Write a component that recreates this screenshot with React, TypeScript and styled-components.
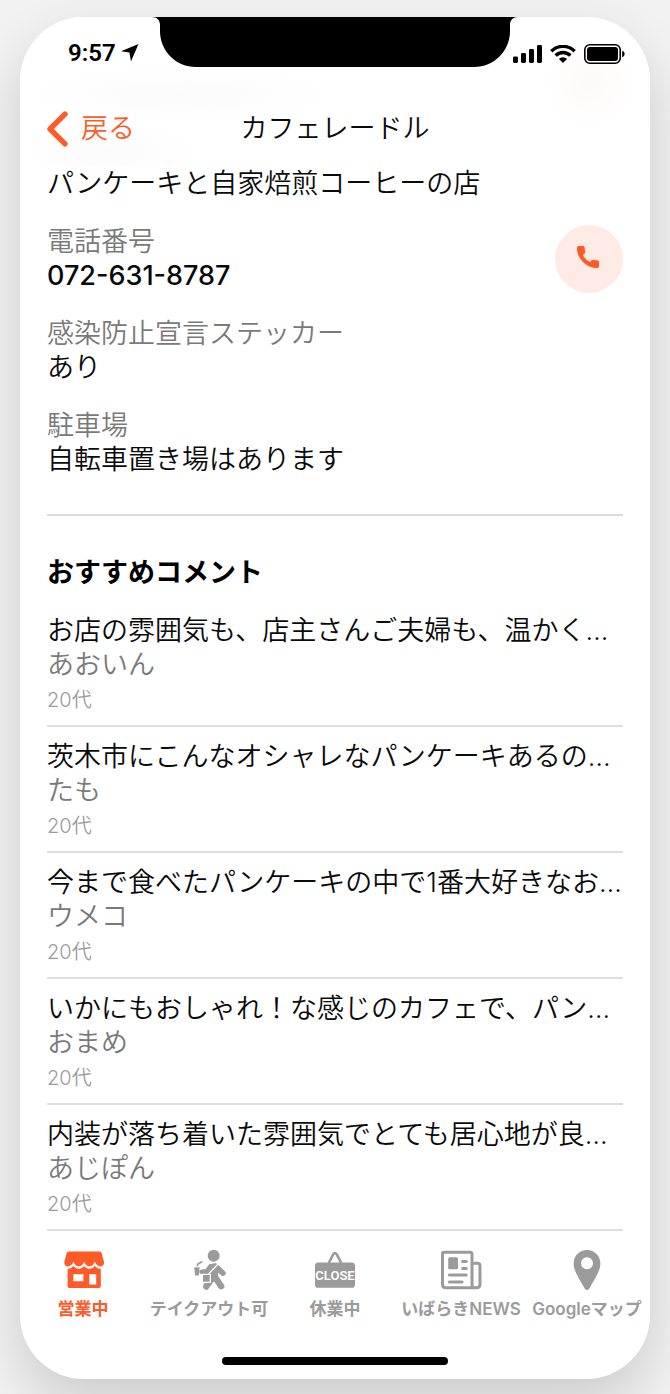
import React from "react";
import styled, { createGlobalStyle } from "styled-components";

const ACCENT = "#ff5a28";
const MUTED = "#9b9b9b";

const GlobalStyle = createGlobalStyle`
  * { box-sizing: border-box; }
  body {
    margin: 0;
    background: #f2f2f2;
    font-family: Inter, "Noto Sans CJK JP", sans-serif;
    font-size: 27px;
    font-weight: 350;
    line-height: 34px;
    color: #0a0a0a;
  }
  svg { display: block; flex: none; }
`;

const Stage = styled.div`
  padding: 17px 20px 15px;
  overflow: hidden;
`;

const Phone = styled.div`
  background: #fff;
  border-radius: 64px;
  overflow: hidden;
  box-shadow: 0 24px 56px rgba(0, 0, 0, 0.16);
`;

const TopArea = styled.header`
  background:
    radial-gradient(ellipse 45px 45px at 570px 66px, #fff9f8, transparent),
    radial-gradient(ellipse 160px 30px at 160px 78px, #fbfbfb, transparent),
    radial-gradient(ellipse 90px 30px at 90px 134px, #fbfbfb, transparent),
    #fff;
`;

const StatusBar = styled.div`
  display: grid;
  grid-template-columns: 1fr auto 1fr;
  height: 50px;
`;

const StatusSide = styled.div<{ $end?: boolean }>`
  display: flex;
  align-items: center;
  justify-content: ${(p) => (p.$end ? "flex-end" : "flex-start")};
  gap: ${(p) => (p.$end ? "8px" : "5px")};
  padding: ${(p) => (p.$end ? "23px 25px 0 0" : "22px 0 0 48px")};
`;

const Clock = styled.time`
  font: 600 24px/28px Roboto, sans-serif;
  color: #000;
`;

const NavBar = styled.div`
  display: grid;
  grid-template-columns: 1fr auto 1fr;
  align-items: center;
  padding: 44px 27px 20px;
`;

const BackButton = styled.button`
  display: flex;
  align-items: center;
  justify-self: start;
  gap: 12px;
  padding: 0;
  border: 0;
  background: none;
  font: inherit;
  color: ${ACCENT};
`;

const Title = styled.h1`
  margin: 0;
  font-size: 27px;
  font-weight: 350;
`;

const Content = styled.main`
  padding: 0 27px;
`;

const Paragraph = styled.p`
  margin: 0;
`;

const InfoList = styled.dl`
  display: flex;
  flex-direction: column;
  gap: 24px;
  margin: 24px 0 37px;
`;

const InfoRow = styled.div`
  display: flex;
  align-items: center;
  justify-content: space-between;
`;

const InfoLabel = styled.dt`
  color: #7a7a7a;
`;

const InfoValue = styled.dd<{ $number?: boolean }>`
  margin: 0;
  font-weight: ${(p) => (p.$number ? 500 : 350)};
`;

const CallButton = styled.button`
  display: grid;
  place-items: center;
  width: 68px;
  height: 68px;
  padding: 0 2px 4px 0;
  border: 0;
  border-radius: 50%;
  background: #ffebe6;
  color: ${ACCENT};
`;

const Divider = styled.hr`
  height: 2px;
  margin: 0;
  border: 0;
  background: #dcdcdc;
`;

const SectionTitle = styled.h2`
  margin: 40px 0 11px;
  font-size: 27px;
  font-weight: 700;
  color: #000;
`;

const CommentList = styled.ul`
  margin: 0;
  padding: 0;
  list-style: none;
`;

const Comment = styled.li`
  padding: 13px 0 12px;
  border-bottom: 2px solid #dedede;
`;

const CommentText = styled.p`
  margin: 0;
  white-space: nowrap;
  overflow: hidden;
  text-overflow: ellipsis;
`;

const Author = styled.p`
  margin: 0;
  color: #7a7a7a;
`;

const Age = styled.p`
  margin: 5px 0 0;
  font-size: 20px;
  line-height: 26px;
  color: #9c9c9c;
`;

const TabBar = styled.nav`
  display: grid;
  grid-template-columns: repeat(5, minmax(0, 1fr));
  padding-top: 18px;
`;

const Tab = styled.a<{ $active?: boolean }>`
  display: flex;
  flex-direction: column;
  align-items: center;
  gap: 8px;
  font-size: 17px;
  font-weight: 600;
  line-height: 20px;
  white-space: nowrap;
  text-decoration: none;
  color: ${(p) => (p.$active ? ACCENT : MUTED)};
`;

const HomeIndicator = styled.div`
  width: 226px;
  height: 8px;
  margin: 38px auto 14px;
  border-radius: 4px;
  background: #000;
`;

const Notch = () => (
  <svg width="350" height="50" viewBox="0 0 350 50" overflow="visible" aria-hidden="true">
    <path d="M-8 0H358C353 0 350 3 350 8V14C350 34 334 50 314 50H36C16 50 0 34 0 14V8C0 3 -3 0 -8 0Z" />
  </svg>
);

const LocationIcon = () => (
  <svg width="18" height="18" viewBox="0 0 18 18" aria-hidden="true">
    <path d="M0 7.2L17.5 0L10 17.5L8.4 8.6Z" />
  </svg>
);

const SignalIcon = () => (
  <svg width="29" height="18" viewBox="0 0 29 18" aria-hidden="true">
    <rect x="0" y="11.5" width="5" height="6.5" rx="1.4" />
    <rect x="8" y="8" width="5" height="10" rx="1.4" />
    <rect x="16" y="4" width="5" height="14" rx="1.4" />
    <rect x="24" y="0" width="5" height="18" rx="1.4" />
  </svg>
);

const WifiIcon = () => (
  <svg width="26" height="18" viewBox="0 0 26 18" aria-hidden="true">
    <g fill="none" stroke="#000" strokeWidth="3.4">
      <path d="M1.3 6.2A16.6 16.6 0 0 1 24.7 6.2" />
      <path d="M5.6 10.5A10.5 10.5 0 0 1 20.4 10.5" />
    </g>
    <path d="M13 18L8.9 13.9A5.8 5.8 0 0 1 17.1 13.9Z" />
  </svg>
);

const BatteryIcon = () => (
  <svg width="41" height="20" viewBox="0 0 41 20" aria-hidden="true">
    <rect x="0.8" y="0.8" width="35.4" height="18.4" rx="5" fill="none" stroke="#000" strokeWidth="1.6" />
    <rect x="3" y="3" width="31" height="14" rx="3" />
    <path d="M38.2 6.8C41.4 8 41.4 12 38.2 13.2Z" />
  </svg>
);

const BackIcon = () => (
  <svg width="22" height="36" viewBox="0 0 22 36" aria-hidden="true">
    <path d="M18 3.2L3 18L18 32.8" fill="none" stroke="currentColor" strokeWidth="5.4" strokeLinecap="round" strokeLinejoin="round" />
  </svg>
);

const CallIcon = () => (
  <svg width="28" height="28" viewBox="0 0 24 24" fill="currentColor" stroke="currentColor" strokeWidth="1" aria-hidden="true">
    <path d="M20.01 15.38c-1.23 0-2.42-.2-3.53-.56a.977.977 0 0 0-1.01.24l-1.57 1.97c-2.83-1.35-5.48-3.9-6.89-6.83l1.95-1.66c.27-.28.35-.67.24-1.02-.37-1.11-.56-2.3-.56-3.53 0-.54-.45-.99-.99-.99H4.19C3.65 3 3 3.24 3 3.99 3 13.28 10.73 21 20.01 21c.71 0 .99-.63.99-1.18v-3.45c0-.54-.45-.99-.99-.99z" />
  </svg>
);

const TabSvg = ({ children }: { children: React.ReactNode }) => (
  <svg width="42" height="42" viewBox="0 0 42 42" fill="currentColor" aria-hidden="true">
    {children}
  </svg>
);

const StoreIcon = () => (
  <TabSvg>
    <path
      fillRule="evenodd"
      d="M5.6 20Q9.5 19.6 11.6 17Q13.6 20 17 20Q20 19.8 22.1 17Q24.2 19.8 27.2 20Q30.6 20 32.7 17Q34.8 19.6 38.8 20V37.3Q38.8 39 37.1 39H7.3Q5.6 39 5.6 37.3ZM11.3 25.3V32.2H21.4V25.3ZM27.3 25.3V35.6H34.2V25.3Z"
    />
    <path d="M6.8 2.6H37.4Q39.3 2.6 39.8 4.4L42 13C42.4 18.6 35.5 19.2 32.7 12.8C31 18.8 24 18.8 22.1 12.8C20.2 18.8 13.2 18.8 11.6 12.8C8.8 19.2 1.9 18.6 2.3 13L4.5 4.4Q5 2.6 6.8 2.6Z" />
  </TabSvg>
);

const TakeoutIcon = () => (
  <TabSvg>
    <circle cx="25.7" cy="6.7" r="6" />
    <g fill="none" stroke="currentColor" strokeLinecap="round" strokeLinejoin="round">
      <path d="M22.5 17.5L18.5 22.4L13.6 22.8" strokeWidth="4.6" />
      <path d="M28.5 18L35 24.2" strokeWidth="5.4" />
      <path d="M26.2 27L33.2 37.2" strokeWidth="6.4" />
      <path d="M22 32L18.3 37.6" strokeWidth="6.4" />
      <path d="M9.4 16.4L10.2 14.8L13.6 13" strokeWidth="1.8" />
    </g>
    <path d="M21 15.5L28 14L31.5 19L29 31L22.5 34.6H15V25L20 22Z" />
    <path d="M6.2 18.2H11.6L10.9 26.4H7Z" />
    <g fill="none" stroke="#fff" strokeWidth="1.3">
      <path d="M31 14L20.4 25.2" />
      <path d="M14 25.4H22.3V33.4H14" />
    </g>
  </TabSvg>
);

const ClosedIcon = () => (
  <TabSvg>
    <path d="M14 15.5L19.2 5.5Q21 2.6 22.8 5.5L28 15.5" fill="none" stroke="currentColor" strokeWidth="2.6" />
    <rect x="1" y="13.6" width="40" height="25.2" rx="3.4" />
    <text x="21" y="31" textAnchor="middle" fill="#fff" fontFamily="Roboto, sans-serif" fontSize="13" fontWeight="600">
      CLOSE
    </text>
  </TabSvg>
);

const NewsIcon = () => (
  <TabSvg>
    <g fill="none" stroke="currentColor" strokeWidth="3">
      <path d="M32 36V5Q32 3.3 30.3 3.3H4.2Q2.5 3.3 2.5 5V35.5Q2.5 38.8 5.8 38.8H36.5Q40 38.8 40 35.3V17Q40 14.3 37.3 14.3H32V36Q32 38.8 35 38.8" />
      <g strokeLinecap="round">
        <path d="M22.6 12.6H26.2M22.6 19.6H26.2M9.4 25.9H26.2M9.4 33H22" />
      </g>
    </g>
    <rect x="8.2" y="8.3" width="9.8" height="12" rx="1.6" />
  </TabSvg>
);

const PinIcon = () => (
  <TabSvg>
    <path fillRule="evenodd" d="M21 1C13.4 1 7.6 6.9 7.6 14.4C7.6 21.2 12.2 28.3 18.6 39.2Q21 43 23.4 39.2C29.8 28.3 34.4 21.2 34.4 14.4C34.4 6.9 28.6 1 21 1ZM21 8.3A6 6 0 1 1 21 20.3A6 6 0 1 1 21 8.3Z" />
  </TabSvg>
);

const comments = [
  { text: "お店の雰囲気も、店主さんご夫婦も、温かく…", author: "あおいん" },
  { text: "茨木市にこんなオシャレなパンケーキあるの…", author: "たも" },
  { text: "今まで食べたパンケーキの中で1番大好きなお…", author: "ウメコ" },
  { text: "いかにもおしゃれ！な感じのカフェで、パン…", author: "おまめ" },
  { text: "内装が落ち着いた雰囲気でとても居心地が良…", author: "あじぽん" },
];

const tabs = [
  { label: "営業中", Icon: StoreIcon },
  { label: "テイクアウト可", Icon: TakeoutIcon },
  { label: "休業中", Icon: ClosedIcon },
  { label: "いばらきNEWS", Icon: NewsIcon },
  { label: "Googleマップ", Icon: PinIcon },
];

export default function App() {
  return (
    <Stage lang="ja">
      <GlobalStyle />
      <Phone>
        <TopArea>
          <StatusBar>
            <StatusSide>
              <Clock>9:57</Clock>
              <LocationIcon />
            </StatusSide>
            <Notch />
            <StatusSide $end>
              <SignalIcon />
              <WifiIcon />
              <BatteryIcon />
            </StatusSide>
          </StatusBar>
          <NavBar>
            <BackButton type="button">
              <BackIcon />
              戻る
            </BackButton>
            <Title>カフェレードル</Title>
          </NavBar>
        </TopArea>
        <Content>
          <Paragraph>パンケーキと自家焙煎コーヒーの店</Paragraph>
          <InfoList>
            <InfoRow>
              <div>
                <InfoLabel>電話番号</InfoLabel>
                <InfoValue $number>072-631-8787</InfoValue>
              </div>
              <CallButton type="button" aria-label="電話をかける">
                <CallIcon />
              </CallButton>
            </InfoRow>
            <div>
              <InfoLabel>感染防止宣言ステッカー</InfoLabel>
              <InfoValue>あり</InfoValue>
            </div>
            <div>
              <InfoLabel>駐車場</InfoLabel>
              <InfoValue>自転車置き場はあります</InfoValue>
            </div>
          </InfoList>
          <Divider />
          <SectionTitle>おすすめコメント</SectionTitle>
          <CommentList>
            {comments.map((c) => (
              <Comment key={c.author}>
                <CommentText>{c.text}</CommentText>
                <Author>{c.author}</Author>
                <Age>20代</Age>
              </Comment>
            ))}
          </CommentList>
        </Content>
        <TabBar>
          {tabs.map(({ label, Icon }, i) => (
            <Tab key={label} href="#" $active={i === 0} aria-current={i === 0 ? "page" : undefined}>
              <Icon />
              {label}
            </Tab>
          ))}
        </TabBar>
        <HomeIndicator />
      </Phone>
    </Stage>
  );
}
